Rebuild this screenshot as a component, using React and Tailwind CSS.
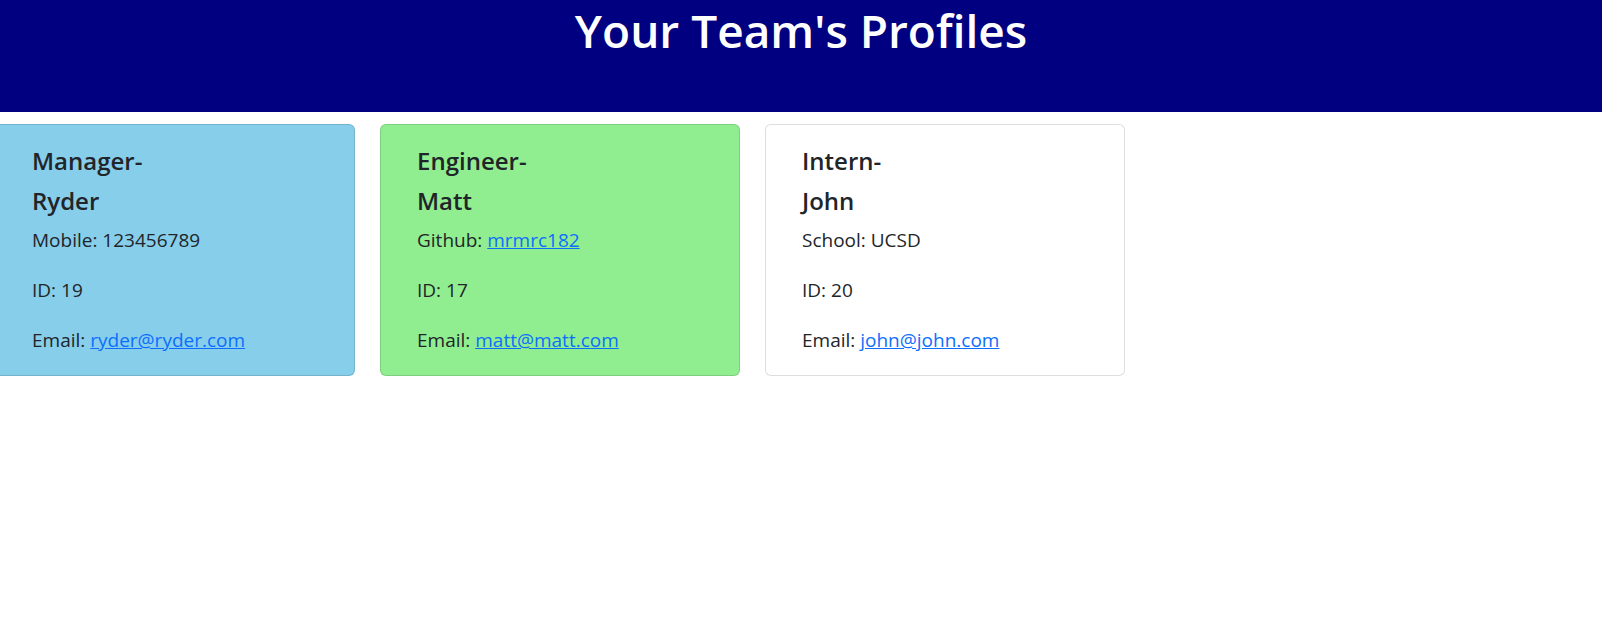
import React from 'react';

const team = [
  {
    role: 'Manager',
    name: 'Ryder',
    label: 'Mobile',
    value: '123456789',
    id: 19,
    email: 'ryder@ryder.com',
    card: 'bg-[#87ceeb]',
  },
  {
    role: 'Engineer',
    name: 'Matt',
    label: 'Github',
    value: 'mrmrc182',
    link: true,
    id: 17,
    email: 'matt@matt.com',
    card: 'bg-[#90ee90]',
  },
  {
    role: 'Intern',
    name: 'John',
    label: 'School',
    value: 'UCSD',
    id: 20,
    email: 'john@john.com',
    card: 'bg-white',
  },
];

function ProfileCard({ p }) {
  return (
    <div
      className={`${p.card} w-[360px] h-[252px] shrink-0 rounded-[6px] border border-[rgba(0,0,0,0.13)] pl-[36px] pt-[16px]`}
    >
      <h3 className="text-[24px] font-semibold leading-[40px] text-[#212529]">
        {p.role}-
        <br />
        {p.name}
      </h3>
      <div className="text-[19px] text-[#212529] leading-[25px]">
        <p className="mt-[7px]">
          {p.label}:{' '}
          {p.link ? (
            <a href="#" className="text-[#0d6efd] underline">
              {p.value}
            </a>
          ) : (
            p.value
          )}
        </p>
        <p className="mt-[25px]">ID: {p.id}</p>
        <p className="mt-[25px]">
          Email:{' '}
          <a href="#" className="text-[#0d6efd] underline">
            {p.email}
          </a>
        </p>
      </div>
    </div>
  );
}

export default function App() {
  return (
    <div className="min-h-screen bg-white font-['Open_Sans',sans-serif] overflow-hidden">
      <header className="bg-[#000080] h-[112px]">
        <h1 className="text-center text-white font-semibold text-[46px] leading-[60px]">
          Your Team's Profiles
        </h1>
      </header>
      <div className="flex gap-[25px] ml-[-5px] mt-[12px]">
        {team.map((p) => (
          <ProfileCard key={p.role} p={p} />
        ))}
      </div>
    </div>
  );
}
